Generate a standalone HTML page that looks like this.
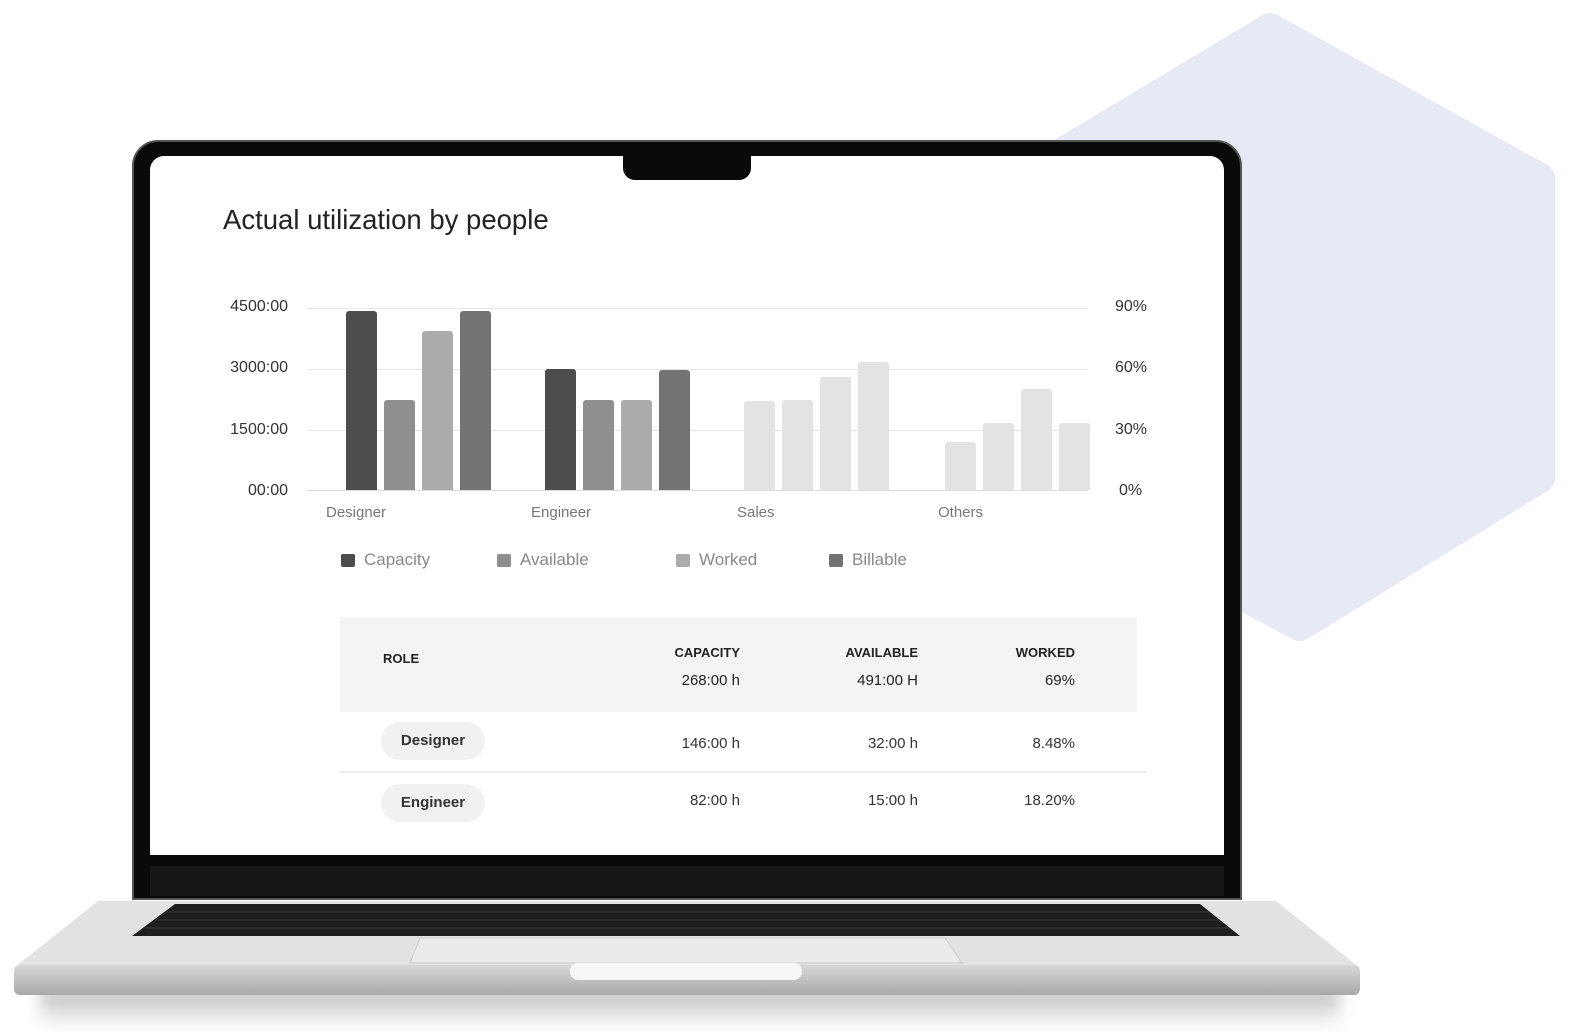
<!DOCTYPE html>
<html><head><meta charset="utf-8"><style>
*{margin:0;padding:0;box-sizing:border-box}
body{width:1574px;height:1034px;background:#fff;position:relative;overflow:hidden;font-family:"Liberation Sans",sans-serif}
.a{position:absolute}
.t{position:absolute;white-space:nowrap}
.r{text-align:right}
.bar{position:absolute;width:31px;border-radius:3px 3px 0 0}
.grid{position:absolute;left:307px;width:781px;height:1px;background:#e6e6e6}
.yl{position:absolute;font-size:16px;color:#333;right:1286px}
.yr{position:absolute;font-size:16px;color:#333;left:1115px}
.xl{position:absolute;font-size:15px;color:#777}
.lg{position:absolute;font-size:17px;color:#888}
.lg i{position:absolute;left:-23px;top:4px;width:14px;height:13px;border-radius:2px}
.th{font-size:13px;font-weight:bold;color:#222}
.td{font-size:15px;color:#333}
.pill{position:absolute;left:381px;width:104px;height:38px;border-radius:19px;background:#f1f1f1;font-size:15px;font-weight:bold;color:#333;text-align:center;line-height:38px}
</style></head><body>
<svg class="a" style="left:0;top:0" width="1574" height="1034">
<polygon points="1270,28 1540,178 1540,478 1300,626 1020,478 1020,178" fill="#e6eaf5" stroke="#e6eaf5" stroke-width="30" stroke-linejoin="round"/>
</svg>
<div class="a" style="left:40px;top:988px;width:1300px;height:40px;background:linear-gradient(#999,rgba(255,255,255,0));filter:blur(8px);opacity:.7"></div>
<div class="a" style="left:132px;top:140px;width:1110px;height:760px;background:#0a0a0a;border-radius:26px 26px 0 0;border:2px solid #555"></div>
<div class="a" style="left:150px;top:156px;width:1074px;height:699px;background:#fff;border-radius:14px 14px 0 0"></div>
<div class="a" style="left:623px;top:156px;width:128px;height:24px;background:#0a0a0a;border-radius:0 0 12px 12px"></div>
<div class="a" style="left:150px;top:866px;width:1074px;height:30px;background:#161616"></div>
<svg class="a" style="left:0;top:893px" width="1574" height="110">
<defs><linearGradient id="f" x1="0" x2="0" y1="0" y2="1"><stop offset="0" stop-color="#d8d8d8"/><stop offset="1" stop-color="#a8a8a8"/></linearGradient></defs>
<polygon points="98,8 1276,8 1360,75 14,75" fill="#e2e2e2"/>
<polygon points="175,11 1200,11 1240,43 132,43" fill="#1e1e1e"/>
<g stroke="#3a3a3a" stroke-width="1"><line x1="165" y1="19" x2="1210" y2="19"/><line x1="155" y1="27" x2="1220" y2="27"/><line x1="145" y1="35" x2="1230" y2="35"/></g>
<polygon points="420,45 945,45 962,70 410,70" fill="#ebebeb" stroke="#ccc"/>
<rect x="14" y="72" width="1346" height="30" rx="6" fill="url(#f)"/>
<rect x="570" y="70" width="232" height="17" rx="8" fill="#f7f7f7"/>
</svg>
<div class="t" style="left:223px;top:204px;font-size:27.5px;color:#222">Actual utilization by people</div>
<div class="grid" style="top:308px"></div><div class="grid" style="top:369px"></div><div class="grid" style="top:430px"></div><div class="grid" style="top:490px;background:#ddd"></div>
<div class="yl" style="top:298px">4500:00</div><div class="yl" style="top:359px">3000:00</div><div class="yl" style="top:421px">1500:00</div><div class="yl" style="top:482px">00:00</div>
<div class="yr" style="top:298px">90%</div><div class="yr" style="top:359px">60%</div><div class="yr" style="top:421px">30%</div><div class="yr" style="top:482px;left:1119px">0%</div>
<div class="bar" style="left:346px;top:311px;height:179px;background:#4d4d4d"></div>
<div class="bar" style="left:384px;top:400px;height:90px;background:#8f8f8f"></div>
<div class="bar" style="left:422px;top:331px;height:159px;background:#ababab"></div>
<div class="bar" style="left:460px;top:311px;height:179px;background:#737373"></div>
<div class="bar" style="left:545px;top:369px;height:121px;background:#4d4d4d"></div>
<div class="bar" style="left:583px;top:400px;height:90px;background:#8f8f8f"></div>
<div class="bar" style="left:621px;top:400px;height:90px;background:#ababab"></div>
<div class="bar" style="left:659px;top:370px;height:120px;background:#737373"></div>
<div class="bar" style="left:744px;top:401px;height:89px;background:#e3e3e3"></div>
<div class="bar" style="left:782px;top:400px;height:90px;background:#e3e3e3"></div>
<div class="bar" style="left:820px;top:377px;height:113px;background:#e3e3e3"></div>
<div class="bar" style="left:858px;top:362px;height:128px;background:#e3e3e3"></div>
<div class="bar" style="left:945px;top:442px;height:48px;background:#e3e3e3"></div>
<div class="bar" style="left:983px;top:423px;height:67px;background:#e3e3e3"></div>
<div class="bar" style="left:1021px;top:389px;height:101px;background:#e3e3e3"></div>
<div class="bar" style="left:1059px;top:423px;height:67px;background:#e3e3e3"></div>
<div class="xl" style="left:326px;top:504px">Designer</div><div class="xl" style="left:531px;top:504px">Engineer</div><div class="xl" style="left:737px;top:504px">Sales</div><div class="xl" style="left:938px;top:504px">Others</div>
<div class="lg" style="left:364px;top:550px"><i style="background:#4d4d4d"></i>Capacity</div>
<div class="lg" style="left:520px;top:550px"><i style="background:#8f8f8f"></i>Available</div>
<div class="lg" style="left:699px;top:550px"><i style="background:#ababab"></i>Worked</div>
<div class="lg" style="left:852px;top:550px"><i style="background:#737373"></i>Billable</div>
<div class="a" style="left:340px;top:617px;width:797px;height:95px;background:#f4f4f4"></div>
<div class="t th" style="left:383px;top:651px">ROLE</div>
<div class="t th r" style="right:834px;top:645px">CAPACITY</div>
<div class="t th r" style="right:656px;top:645px">AVAILABLE</div>
<div class="t th r" style="right:499px;top:645px">WORKED</div>
<div class="t td r" style="right:834px;top:672px;color:#222">268:00 h</div>
<div class="t td r" style="right:656px;top:672px;color:#222">491:00 H</div>
<div class="t td r" style="right:499px;top:672px;color:#222">69%</div>
<div class="pill" style="top:722px">Designer</div>
<div class="t td r" style="right:834px;top:735px">146:00 h</div>
<div class="t td r" style="right:656px;top:735px">32:00 h</div>
<div class="t td r" style="right:499px;top:735px">8.48%</div>
<div class="a" style="left:340px;top:771px;width:807px;height:2px;background:#ececec"></div>
<div class="pill" style="top:784px">Engineer</div>
<div class="t td r" style="right:834px;top:792px">82:00 h</div>
<div class="t td r" style="right:656px;top:792px">15:00 h</div>
<div class="t td r" style="right:499px;top:792px">18.20%</div>
</body></html>
